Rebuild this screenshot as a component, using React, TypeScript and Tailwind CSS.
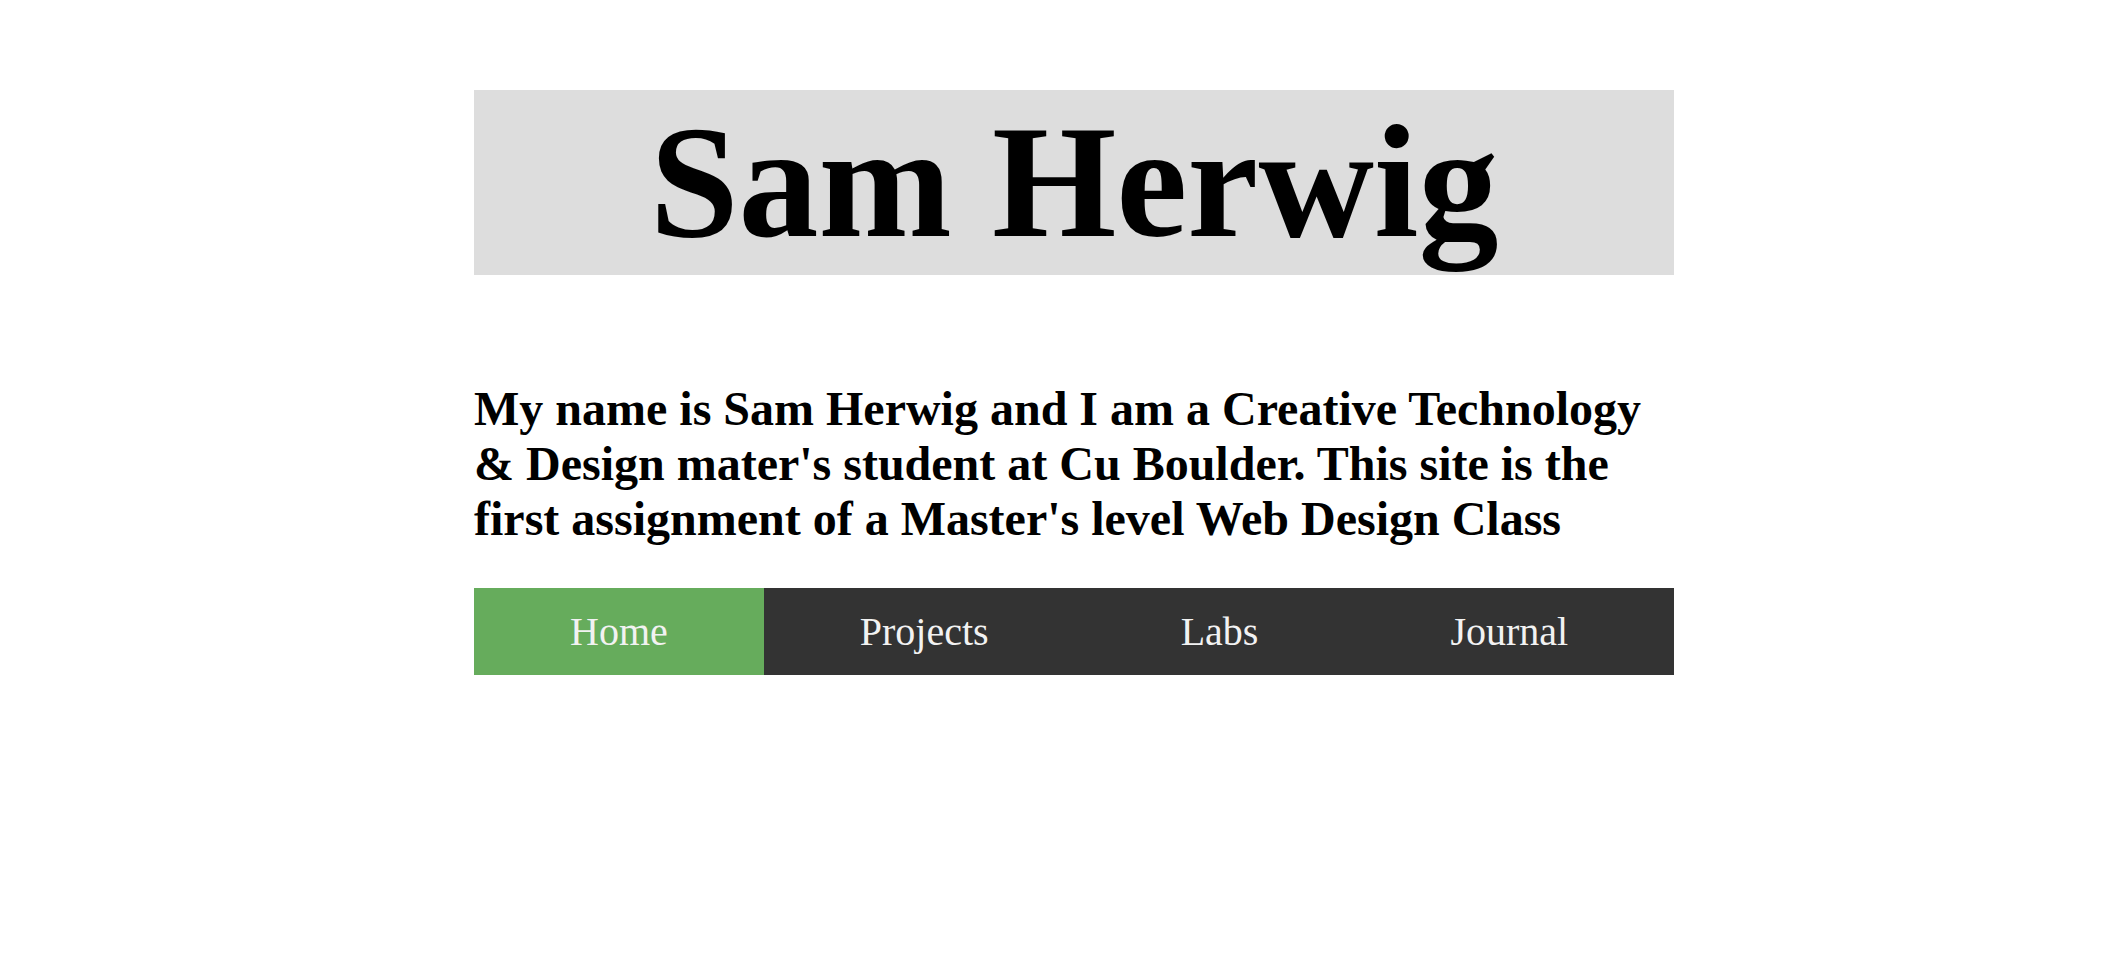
const links = ["Home", "Projects", "Labs", "Journal"];

export default function App() {
  const active = "Home";

  return (
    <div className="min-h-screen bg-white font-['Liberation_Serif','Times_New_Roman',serif] text-black">
      <div className="ml-[474px] w-[1200px] pt-[90px]">
        <h1 className="bg-[#dddddd] text-center text-[160px] font-bold leading-[normal]">Sam Herwig</h1>

        <p className="mt-[106px] text-[48px] font-bold leading-[normal]">
          My name is Sam Herwig and I am a Creative Technology &amp; Design mater's student at Cu Boulder. This site
          is the first assignment of a Master's level Web Design Class
        </p>

        <nav className="mt-[42px] flex bg-[#333333]">
          {links.map((l) => (
            <a
              key={l}
              href="#"
              className={
                l === active
                  ? "bg-[#66ac5c] px-[96px] py-[20px] text-[40px] leading-[normal] text-[#f2f2f2]"
                  : "px-[96px] py-[20px] text-[40px] leading-[normal] text-[#f2f2f2] hover:bg-[#dddddd] hover:text-black"
              }
            >
              {l}
            </a>
          ))}
        </nav>
      </div>
    </div>
  );
}
